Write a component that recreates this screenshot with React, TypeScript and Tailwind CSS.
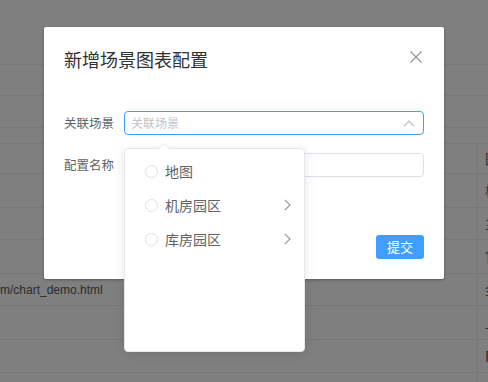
import React from "react";

const CJK = { fontFamily: '"Noto Sans CJK SC", "Noto Sans", sans-serif' };

const rows: { h: number; cell?: string; right?: string; rightColor?: string }[] = [
  { h: 65 },
  { h: 31 },
  { h: 32 },
  { h: 16 },
  { h: 30, right: "图" },
  { h: 34, right: "校" },
  { h: 32, right: "主" },
  { h: 34, right: "官" },
  { h: 32, cell: "m/chart_demo.html", right: "金" },
  { h: 34, right: "上", rightColor: "#3a2a2a" },
  { h: 33, right: "F", rightColor: "#4a2020" },
];

function Background() {
  return (
    <div className="flex flex-col w-[488px] h-[382px] bg-[#7f7f7f] overflow-hidden">
      {rows.map((r, i) => (
        <div
          key={i}
          className="flex shrink-0 border-b border-[#75777a] box-border"
          style={{ height: r.h }}
        >
          <div className="flex-1 flex items-center text-[12px] text-[#2b2c2e]" style={{ fontFamily: '"Liberation Sans", Arial, sans-serif' }}>
            {r.cell ?? ""}
          </div>
          {i >= 4 ? (
            <div className="w-[11px] shrink-0 border-l border-[#75777a] flex items-center pl-[7px] overflow-hidden">
              <span className="text-[14px] whitespace-nowrap" style={{ ...CJK, color: r.rightColor ?? "#2e2f31" }}>
                {r.right}
              </span>
            </div>
          ) : null}
        </div>
      ))}
      <div className="flex-1 flex">
        <div className="flex-1" />
        <div className="w-[11px] border-l border-[#75777a]" />
      </div>
    </div>
  );
}

function CloseIcon() {
  return (
    <svg width="14" height="14" viewBox="0 0 14 14" fill="none">
      <path d="M1.5 1.5 L12.5 12.5 M12.5 1.5 L1.5 12.5" stroke="#909399" strokeWidth="1.2" />
    </svg>
  );
}

function ChevronUp() {
  return (
    <svg width="12" height="7" viewBox="0 0 12 7" fill="none">
      <path d="M0.8 6.3 L6 1.2 L11.2 6.3" stroke="#c0c4cc" strokeWidth="1.2" />
    </svg>
  );
}

function ChevronRight() {
  return (
    <svg width="7" height="12" viewBox="0 0 7 12" fill="none">
      <path d="M0.8 0.8 L6 6 L0.8 11.2" stroke="#909399" strokeWidth="1.1" />
    </svg>
  );
}

function Dialog() {
  return (
    <div className="absolute left-[44px] top-[27px] w-[400px] bg-white rounded-[2px] shadow-[0_1px_3px_rgba(0,0,0,0.3)]" style={CJK}>
      <div className="relative pt-[20px] px-[20px] pb-[10px]">
        <div className="text-[18px] leading-[24px] text-[#303133]">新增场景图表配置</div>
        <div className="absolute right-[20px] top-[22px] w-[16px] h-[16px] flex items-center justify-center">
          <CloseIcon />
        </div>
      </div>
      <div className="py-[30px] px-[20px]">
        <div className="flex items-center mb-[18px]">
          <div className="w-[60px] text-[12.5px] text-[#606266] leading-[24px]">关联场景</div>
          <div className="flex-1 h-[24px] border border-[#409eff] rounded-[4px] flex items-center justify-between pl-[6px] pr-[8px]">
            <span className="text-[12px] text-[#c0c4cc]">关联场景</span>
            <ChevronUp />
          </div>
        </div>
        <div className="flex items-center mb-[18px]">
          <div className="w-[60px] text-[12.5px] text-[#606266] leading-[24px]">配置名称</div>
          <div className="flex-1 h-[24px] border border-[#dcdfe6] rounded-[4px]" />
        </div>
      </div>
      <div className="flex justify-end pt-[10px] px-[20px] pb-[20px]">
        <div className="w-[48px] h-[24px] rounded-[3px] bg-[#409eff] text-white text-[13px] flex items-center justify-center">
          提交
        </div>
      </div>
    </div>
  );
}

function Dropdown() {
  const items = [
    { label: "地图", sub: false },
    { label: "机房园区", sub: true },
    { label: "库房园区", sub: true },
  ];
  return (
    <div className="absolute left-[124px] top-[148px] w-[181px] h-[204px] bg-white border border-[#e4e7ed] rounded-[4px] shadow-[0_2px_12px_rgba(0,0,0,0.1)]" style={CJK}>
      <div className="absolute -top-[6px] left-[33px] w-0 h-0 border-l-[6px] border-r-[6px] border-b-[6px] border-l-transparent border-r-transparent border-b-[#e4e7ed]" />
      <div className="absolute -top-[5px] left-[34px] w-0 h-0 border-l-[5px] border-r-[5px] border-b-[5px] border-l-transparent border-r-transparent border-b-white" />
      <div className="py-[5px]">
        {items.map((it) => (
          <div key={it.label} className="h-[34px] flex items-center pl-[20px] pr-[13px]">
            <span className="w-[13px] h-[13px] rounded-full border border-[#dcdfe6] bg-white shrink-0" />
            <span className="ml-[7px] text-[14px] text-[#606266] flex-1">{it.label}</span>
            {it.sub ? <ChevronRight /> : null}
          </div>
        ))}
      </div>
    </div>
  );
}

export default function App() {
  return (
    <div className="relative w-[488px] h-[382px] overflow-hidden">
      <Background />
      <Dialog />
      <Dropdown />
    </div>
  );
}
